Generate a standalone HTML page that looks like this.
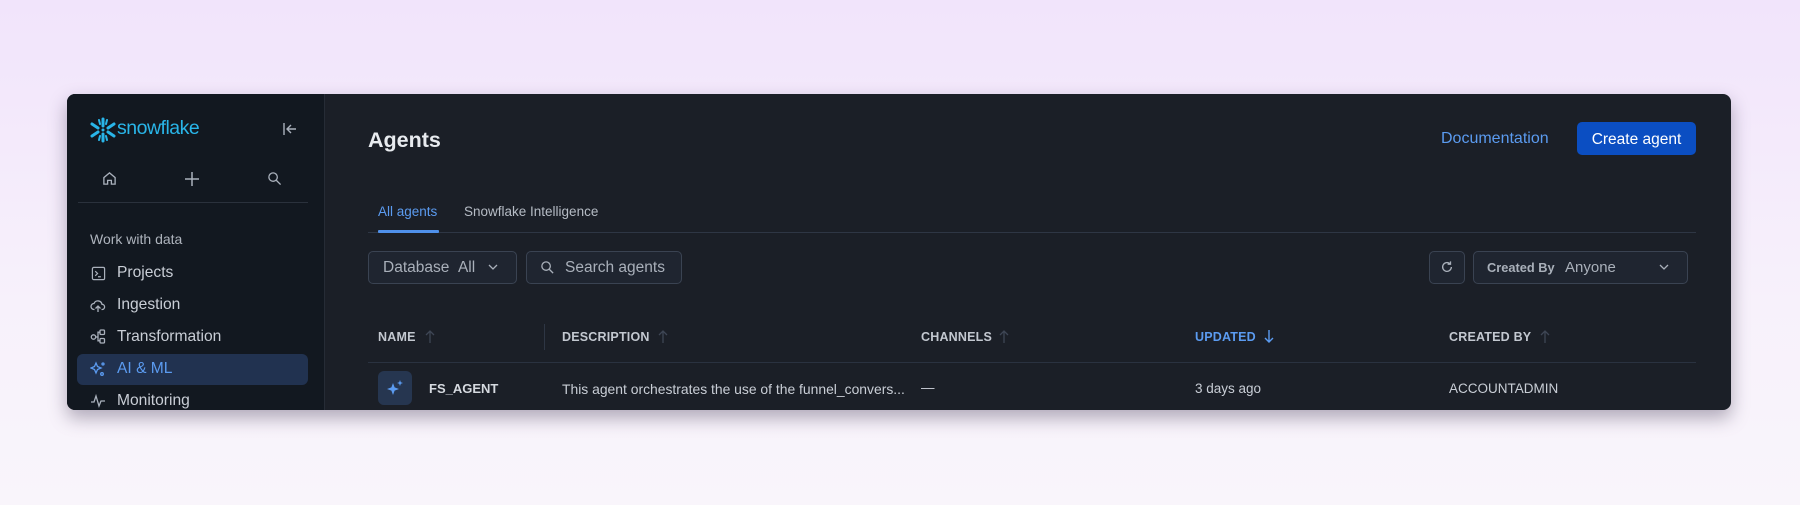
<!DOCTYPE html>
<html><head><meta charset="utf-8"><style>
*{box-sizing:border-box;margin:0;padding:0}
body{width:1800px;height:505px;overflow:hidden;background:linear-gradient(180deg,#f1e4fb 0%,#f7f1fb 60%,#f9f5fb 100%);font-family:"Liberation Sans",sans-serif;position:relative}
.card{position:absolute;left:67px;top:94px;width:1664px;height:316px;border-radius:8px;background:#1b1f27;overflow:hidden;box-shadow:0 8px 18px rgba(40,30,60,.35)}
.side{position:absolute;left:0;top:0;width:258px;height:316px;background:#121820;border-right:1px solid #262c36}
.a{position:absolute;white-space:nowrap}
.nav{color:#c9ced6;font-size:15.6px}
.box{position:absolute;border:1px solid #3a4352;border-radius:5px;background:#1f2530}
.hd{color:#c3c8d0;font-size:12.5px;font-weight:bold;letter-spacing:.2px}
.row{color:#c9ced6;font-size:13.5px}
svg{position:absolute}
</style></head><body>
<div class="card">
 <div class="side">
  <svg style="left:22px;top:23px" width="28" height="26" viewBox="0 0 28 26" fill="none" stroke="#29b5e8" stroke-width="3" stroke-linecap="round">
   <path d="M14 2v7M14 17v7M3 7l6 4M19 15l6 4M3 19l6-4M19 11l6-4"/><path d="M10 3l1 4M18 3l-1 4M10 23l1-4M18 23l-1-4" stroke-width="2"/><circle cx="14" cy="13" r="1.5" fill="#29b5e8" stroke="none"/>
  </svg>
  <div class="a" style="left:50px;top:23px;color:#29b5e8;font-size:19.5px;letter-spacing:-.5px">snowflake</div>
  <svg style="left:215px;top:27px" width="16" height="16" viewBox="0 0 16 16" fill="none" stroke="#aab1bc" stroke-width="1.4"><path d="M2 2v12M14 8H5M9 4L5 8l4 4"/></svg>
  <svg style="left:35px;top:77px" width="15" height="15" viewBox="0 0 16 16" fill="none" stroke="#aab1bc" stroke-width="1.4"><path d="M2 14V7l6-5 6 5v7h-4v-4H6v4z"/></svg>
  <svg style="left:117px;top:77px" width="16" height="16" viewBox="0 0 16 16" fill="none" stroke="#aab1bc" stroke-width="1.5"><path d="M8 1v14M1 8h14"/></svg>
  <svg style="left:200px;top:77px" width="15" height="15" viewBox="0 0 16 16" fill="none" stroke="#aab1bc" stroke-width="1.4"><circle cx="6.5" cy="6.5" r="4.5"/><path d="M10 10l4.5 4.5"/></svg>
  <div style="position:absolute;left:11px;top:108px;width:230px;height:1px;background:#2a313c"></div>
  <div class="a" style="left:23px;top:137px;color:#aeb4bd;font-size:14px">Work with data</div>
  <svg style="left:24px;top:172px" width="15" height="15" viewBox="0 0 16 16" fill="none" stroke="#aab1bc" stroke-width="1.3"><rect x="1.5" y="1.5" width="13" height="13" rx="1.5"/><path d="M4.5 5.5l2.5 2.5-2.5 2.5M7.5 11.5h3"/></svg>
  <div class="a nav" style="left:50px;top:170px">Projects</div>
  <svg style="left:23px;top:204px" width="16" height="15" viewBox="0 0 16 15" fill="none" stroke="#aab1bc" stroke-width="1.3"><path d="M4.5 11.5H4A3 3 0 0 1 4 5.5a4.2 4.2 0 0 1 8 .8 2.6 2.6 0 0 1 0 5.2h-.5M8 14V8M5.5 10.5L8 8l2.5 2.5"/></svg>
  <div class="a nav" style="left:50px;top:202px">Ingestion</div>
  <svg style="left:23px;top:235px" width="16" height="15" viewBox="0 0 16 15" fill="none" stroke="#aab1bc" stroke-width="1.3"><circle cx="3.5" cy="8" r="2.2"/><rect x="10" y="1" width="4.5" height="4.5" rx="1"/><rect x="10" y="9.5" width="4.5" height="4.5" rx="1"/><path d="M5.7 8H8V3.2h2M8 8v3.8h2"/></svg>
  <div class="a nav" style="left:50px;top:234px">Transformation</div>
  <div style="position:absolute;left:10px;top:260px;width:231px;height:31px;border-radius:6px;background:#213250"></div>
  <svg style="left:23px;top:267px" width="16" height="16" viewBox="0 0 16 16" fill="none" stroke="#5b9bf0" stroke-width="1.3"><path d="M6 2l1.5 3.5L11 7 7.5 8.5 6 12 4.5 8.5 1 7l3.5-1.5z"/><circle cx="13" cy="3" r="1"/><circle cx="12" cy="13" r="1.3"/></svg>
  <div class="a nav" style="left:50px;top:266px;color:#5b9bf0">AI &amp; ML</div>
  <svg style="left:23px;top:300px" width="16" height="14" viewBox="0 0 16 14" fill="none" stroke="#aab1bc" stroke-width="1.3"><path d="M1 8h3l2-6 3 10 2-5h4"/></svg>
  <div class="a nav" style="left:50px;top:298px">Monitoring</div>
 </div>
 <div class="a" style="left:301px;top:34px;color:#e8ebef;font-size:21.5px;font-weight:bold">Agents</div>
 <div class="a" style="left:1374px;top:36px;color:#5b9bf0;font-size:16px">Documentation</div>
 <div style="position:absolute;left:1510px;top:28px;width:119px;height:33px;border-radius:5px;background:#0b4ec2;color:#fff;font-size:15.5px;text-align:center;line-height:35px">Create agent</div>
 <div class="a" style="left:311px;top:110px;color:#5b9bf0;font-size:13.5px">All agents</div>
 <div class="a" style="left:397px;top:110px;color:#b6bcc5;font-size:13.5px">Snowflake Intelligence</div>
 <div style="position:absolute;left:301px;top:138px;width:1328px;height:1px;background:#2e3644"></div>
 <div style="position:absolute;left:311px;top:136px;width:61px;height:3px;background:#4f90ea;border-radius:1px"></div>
 <div class="box" style="left:301px;top:157px;width:149px;height:33px"></div>
 <div class="a" style="left:316px;top:165px;color:#a9b0ba;font-size:15.5px">Database&nbsp;&nbsp;All</div>
 <svg style="left:420px;top:168px" width="12" height="10" viewBox="0 0 12 10" fill="none" stroke="#a9b0ba" stroke-width="1.3"><path d="M2 3l4 4 4-4"/></svg>
 <div class="box" style="left:459px;top:157px;width:156px;height:33px"></div>
 <svg style="left:473px;top:166px" width="15" height="15" viewBox="0 0 16 16" fill="none" stroke="#a9b0ba" stroke-width="1.4"><circle cx="6.5" cy="6.5" r="4.5"/><path d="M10 10l4 4"/></svg>
 <div class="a" style="left:498px;top:165px;color:#a9b0ba;font-size:15.5px">Search agents</div>
 <div class="box" style="left:1362px;top:157px;width:36px;height:33px"></div>
 <svg style="left:1373px;top:166px" width="14" height="14" viewBox="0 0 16 16" fill="none" stroke="#a9b0ba" stroke-width="1.5"><path d="M13 8a5 5 0 1 1-1.5-3.6M12 1.5v3.3H8.7"/></svg>
 <div class="box" style="left:1406px;top:157px;width:215px;height:33px"></div>
 <div class="a" style="left:1420px;top:166px;color:#a9b0ba;font-size:12.8px;font-weight:bold">Created By</div>
 <div class="a" style="left:1498px;top:165px;color:#a9b0ba;font-size:15px">Anyone</div>
 <svg style="left:1591px;top:168px" width="12" height="10" viewBox="0 0 12 10" fill="none" stroke="#a9b0ba" stroke-width="1.3"><path d="M2 3l4 4 4-4"/></svg>
 <div class="a hd" style="left:311px;top:236px">NAME</div>
 <div class="a hd" style="left:495px;top:236px">DESCRIPTION</div>
 <div class="a hd" style="left:854px;top:236px">CHANNELS</div>
 <div class="a hd" style="left:1128px;top:236px;color:#5b9bf0">UPDATED</div>
 <div class="a hd" style="left:1382px;top:236px">CREATED BY</div>
 <svg style="left:357px;top:235px" width="12" height="15" viewBox="0 0 12 15" fill="none" stroke="#3e4655" stroke-width="1.3"><path d="M6 14V2M2 6l4-4 4 4"/></svg>
 <svg style="left:590px;top:235px" width="12" height="15" viewBox="0 0 12 15" fill="none" stroke="#3e4655" stroke-width="1.3"><path d="M6 14V2M2 6l4-4 4 4"/></svg>
 <svg style="left:931px;top:235px" width="12" height="15" viewBox="0 0 12 15" fill="none" stroke="#3e4655" stroke-width="1.3"><path d="M6 14V2M2 6l4-4 4 4"/></svg>
 <svg style="left:1196px;top:235px" width="12" height="15" viewBox="0 0 12 15" fill="none" stroke="#5b9bf0" stroke-width="1.4"><path d="M6 1v12M2 9l4 4 4-4"/></svg>
 <svg style="left:1472px;top:235px" width="12" height="15" viewBox="0 0 12 15" fill="none" stroke="#3e4655" stroke-width="1.3"><path d="M6 14V2M2 6l4-4 4 4"/></svg>
 <div style="position:absolute;left:477px;top:230px;width:1px;height:26px;background:#2e3644"></div>
 <div style="position:absolute;left:301px;top:268px;width:1328px;height:1px;background:#2a3240"></div>
 <div style="position:absolute;left:311px;top:277px;width:34px;height:34px;border-radius:6px;background:#263650"></div>
 <svg style="left:318px;top:284px" width="20" height="20" viewBox="0 0 20 20" fill="#5b9bf0"><path d="M8 5l1.6 4.4L14 11l-4.4 1.6L8 17l-1.6-4.4L2 11l4.4-1.6z"/><path d="M15 2l.8 2.2L18 5l-2.2.8L15 8l-.8-2.2L12 5l2.2-.8z"/></svg>
 <div class="a row" style="left:362px;top:287px;font-weight:bold;color:#d6dae0;font-size:13px">FS_AGENT</div>
 <div class="a row" style="left:495px;top:287px;font-size:13.9px">This agent orchestrates the use of the funnel_convers...</div>
 <div class="a row" style="left:854px;top:286px">—</div>
 <div class="a row" style="left:1128px;top:287px">3 days ago</div>
 <div class="a row" style="left:1382px;top:287px">ACCOUNTADMIN</div>
</div>
</body></html>
